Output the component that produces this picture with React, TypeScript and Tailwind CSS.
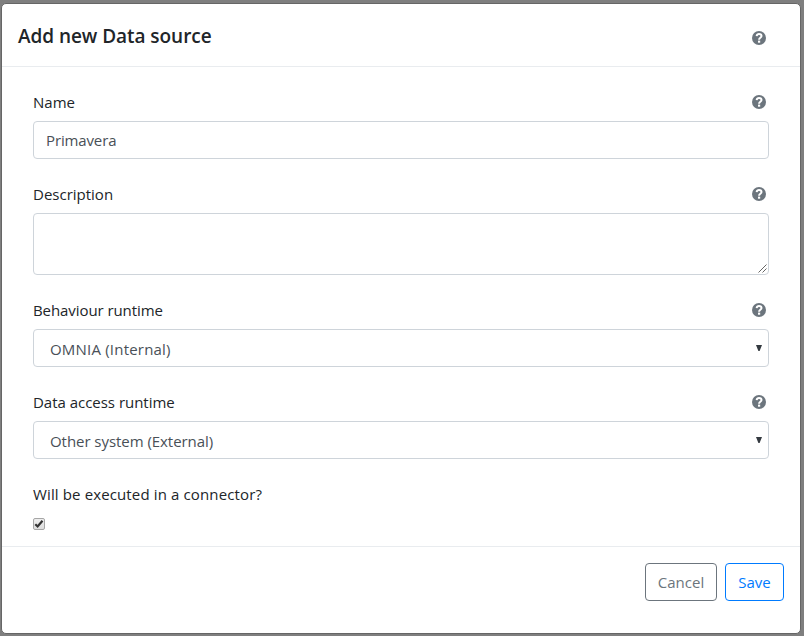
import type { ReactNode } from "react";

function Help() {
  return (
    <svg className="mr-[3px] size-[14px] shrink-0" viewBox="0 0 14 14" fill="none">
      <circle cx="7" cy="7" r="7" fill="#6c757d" />
      <path d="M4.6 5.1C4.900 3.800 5.800 3.100 7 3.100c1.500 0 2.500.8 2.500 2C9.500 6.800 7.100 6.800 7.100 8.700" stroke="#fff" strokeWidth="2" />
      <rect x="6" y="9.600" width="2.200" height="2.100" fill="#fff" />
    </svg>
  );
}

function Field({ label, spacing, children }: { label: string; spacing: string; children: ReactNode }) {
  return (
    <div className="mb-[22px]">
      <div className="mb-2 flex h-6 items-center justify-between pt-[2px]">
        <span className={"whitespace-nowrap " + spacing}>{label}</span>
        <Help />
      </div>
      {children}
    </div>
  );
}

function Select({ value, spacing }: { value: string; spacing: string }) {
  return (
    <div className="flex h-[38px] items-center justify-between rounded border border-[#ced4da] pt-[2px] pr-[6px] pl-4 text-[#495057]">
      <span className={spacing}>{value}</span>
      <svg className="mb-[3px] h-[6px] w-[6px]" viewBox="0 0 6 6" fill="#343a40">
        <path d="M0 0h6L3.6 6H2.4z" />
      </svg>
    </div>
  );
}

export default function App() {
  return (
    <div className="h-[636px] w-[804px] overflow-hidden bg-[#7f7f7f] pt-[3px] pl-px font-['Open_Sans',sans-serif] text-[15px] leading-6 text-[#212529]">
      <div className="flex h-[631px] w-[800px] flex-col rounded-[5px] border border-[#666] bg-white">
        <header className="flex h-[63px] shrink-0 items-center justify-between border-b border-[#e9ecef] pr-[31px] pl-4">
          <h5 className="mt-[2px] text-[19px] font-semibold tracking-[-0.05px]">Add new Data source</h5>
          <div className="mt-[5px]"><Help /></div>
        </header>
        <main className="h-[479px] shrink-0 px-[31px] pt-[22px]">
          <Field label="Name" spacing="tracking-[0px]">
            <div className="flex h-[38px] items-center rounded border border-[#ced4da] px-3 text-[#495057]">
              <span className="tracking-[-0.13px]">Primavera</span>
            </div>
          </Field>
          <Field label="Description" spacing="tracking-[0px]">
            <div className="flex h-[62px] items-end justify-end rounded border border-[#ced4da] p-px">
              <svg className="size-[9px]" viewBox="0 0 9 9" stroke="#555" strokeWidth=".9">
                <path d="M.5 8.5l8-8M4.5 8.5l4-4" />
              </svg>
            </div>
          </Field>
          <Field label="Behaviour runtime" spacing="tracking-[-0.08px]">
            <Select value="OMNIA (Internal)" spacing="tracking-[0.2px]" />
          </Field>
          <Field label="Data access runtime" spacing="tracking-[-0.02px]">
            <Select value="Other system (External)" spacing="tracking-[-0.05px]" />
          </Field>
          <div className="flex h-6 items-center pt-[2px]"><span className="tracking-[0.13px]">Will be executed in a connector?</span></div>
          <div className="mt-[13px] flex size-3 items-center justify-center rounded-[2px] border border-[#a6a6a6] bg-gradient-to-b from-[#eeeeee] to-[#dddddd]">
            <svg className="size-[10px] shrink-0" viewBox="0 0 10 10" fill="none" stroke="#333" strokeWidth="2.2">
              <path d="M1.3 5.3l2.3 2.2L8.5 1.7" />
            </svg>
          </div>
        </main>
        <footer className="flex h-[55px] shrink-0 justify-end gap-2 border-t border-[#e9ecef] pt-4 pr-4">
          <button className="h-[38px] w-[72px] rounded border border-[#6c757d] pb-px text-[#6c757d]">Cancel</button>
          <button className="h-[38px] w-[59px] rounded border border-[#007bff] pb-px text-[#007bff]">Save</button>
        </footer>
      </div>
    </div>
  );
}
